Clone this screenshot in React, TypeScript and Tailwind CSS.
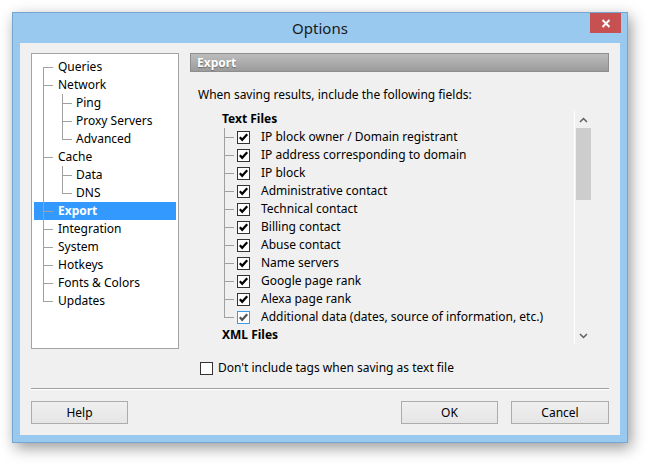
import * as React from 'react'

interface NavRow {
  label: string
  level: 0 | 1
  first?: boolean
  last?: boolean
  selected?: boolean
}

const navRows: NavRow[] = [
  { label: 'Queries', level: 0, first: true },
  { label: 'Network', level: 0 },
  { label: 'Ping', level: 1, first: true },
  { label: 'Proxy Servers', level: 1 },
  { label: 'Advanced', level: 1, last: true },
  { label: 'Cache', level: 0 },
  { label: 'Data', level: 1, first: true },
  { label: 'DNS', level: 1, last: true },
  { label: 'Export', level: 0, selected: true },
  { label: 'Integration', level: 0 },
  { label: 'System', level: 0 },
  { label: 'Hotkeys', level: 0 },
  { label: 'Fonts & Colors', level: 0 },
  { label: 'Updates', level: 0, last: true },
]

const fields = [
  'IP block owner / Domain registrant',
  'IP address corresponding to domain',
  'IP block',
  'Administrative contact',
  'Technical contact',
  'Billing contact',
  'Abuse contact',
  'Name servers',
  'Google page rank',
  'Alexa page rank',
  'Additional data (dates, source of information, etc.)',
]

const LINE = '#a0a0a0'

// one tree connector cell: vertical line at x, elbow to the right at the row middle
const Connector = ({ width, x, top, bottom, elbowTo }: { width: number, x: number, top: number, bottom: number, elbowTo?: number }) => (
  <svg width={width} height={18} className="shrink-0" shapeRendering="crispEdges">
    <line x1={x + 0.5} y1={top} x2={x + 0.5} y2={bottom} stroke={LINE} />
    {elbowTo !== undefined && <line x1={x} y1={9.5} x2={elbowTo} y2={9.5} stroke={LINE} />}
  </svg>
)

const CheckBox = ({ checked, focused }: { checked: boolean, focused?: boolean }) => (
  <span
    className={`flex h-[13px] w-[13px] shrink-0 items-center justify-center border bg-white ${focused ? 'border-[#3c9be8]' : 'border-[#333333]'}`}
  >
    {checked && (
      <svg width="11" height="11" viewBox="0 0 11 11">
        <path d="M1.8 5.2 L4.2 7.8 L9.2 2.2" fill="none" stroke={focused ? '#555' : '#000'} strokeWidth="2.2" />
      </svg>
    )}
  </span>
)

const NavTree = () => (
  <div className="h-[296px] w-[148px] shrink-0 border border-[#a3a3a3] bg-white px-[2px] pt-[4px]">
    {navRows.map((row) => {
      const cls = row.selected ? 'bg-[#3399ff] text-white font-bold' : 'text-black'
      return (
        <div key={row.label} className={`flex h-[18px] items-center ${cls}`}>
          {row.level === 0
            ? (
                <Connector width={24} x={9} top={row.first ? 9 : 0} bottom={row.last ? 10 : 18} elbowTo={19} />
              )
            : (
                <>
                  <Connector width={24} x={9} top={0} bottom={18} />
                  <Connector width={18} x={4} top={0} bottom={row.last ? 10 : 18} elbowTo={14} />
                </>
              )}
          <span className="whitespace-nowrap leading-[18px]">{row.label}</span>
        </div>
      )
    })}
  </div>
)

const Chevron = ({ up }: { up?: boolean }) => (
  <svg width="9" height="6" viewBox="0 0 9 6">
    <path d={up ? 'M1 5 L4.5 1.5 L8 5' : 'M1 1 L4.5 4.5 L8 1'} fill="none" stroke="#606060" strokeWidth="1.5" />
  </svg>
)

const FieldList = () => (
  <div className="mt-[7px] ml-[8px] flex h-[234px] w-[393px]">
    <div className="w-[376px] overflow-hidden">
      <div className="flex h-[18px] items-center pl-[24px] font-bold">Text Files</div>
      {fields.map((f, i) => (
        <div key={f} className="flex h-[18px] items-center">
          <span className="w-[20px] shrink-0" />
          <Connector width={19} x={6} top={0} bottom={i === fields.length - 1 ? 10 : 18} elbowTo={16} />
          <CheckBox checked focused={i === fields.length - 1} />
          <span className="ml-[11px] whitespace-nowrap">{f}</span>
        </div>
      ))}
      <div className="flex h-[18px] items-center pl-[24px] font-bold">XML Files</div>
    </div>
    {/* scrollbar */}
    <div className="mt-[1px] flex w-[17px] flex-col border-l border-white">
      <div className="flex h-[17px] items-center justify-center"><Chevron up /></div>
      <div className="mx-auto h-[72px] w-[15px] bg-[#cdcdcd]" />
      <div className="flex-1" />
      <div className="flex h-[17px] items-center justify-center"><Chevron /></div>
    </div>
  </div>
)

const DlgButton = ({ label, w }: { label: string, w: string }) => (
  <button className={`h-[23px] ${w} border border-[#acacac] bg-gradient-to-b from-[#f0f0f0] to-[#e5e5e5] text-[12px] text-black`}>
    {label}
  </button>
)

export default function App() {
  return (
    <div className="h-[464px] w-[648px] overflow-hidden bg-white pt-[12px] pl-[12px] font-['Noto_Sans',sans-serif] text-[12px] text-black">
      <div className="flex h-[431px] w-[616px] flex-col border border-[#77a5d2] bg-[#99c9ef] shadow-[3px_5px_14px_rgba(0,0,0,0.4)]">
        {/* title bar */}
        <div className="flex h-[30px] shrink-0 items-start">
          <div className="w-[37px] shrink-0" />
          <div className="flex h-[30px] flex-1 items-center justify-center text-[15px] text-[#1a1a1a]">Options</div>
          <div className="flex h-[20px] w-[31px] shrink-0 items-center justify-center bg-[#c75050]">
            <svg width="10" height="9" viewBox="0 0 10 9">
              <path d="M1.5 1 L8.5 8 M8.5 1 L1.5 8" stroke="#fff" strokeWidth="2" />
            </svg>
          </div>
          <div className="w-[6px] shrink-0" />
        </div>

        {/* client area */}
        <div className="mx-[7px] mb-[7px] flex flex-1 flex-col bg-[#f0f0f0] px-[11px] pt-[10px]">
          <div className="flex items-start gap-[11px]">
            <NavTree />
            <div className="flex flex-1 flex-col">
              <div className="flex h-[19px] items-center border border-[#8e8e8e] bg-gradient-to-b from-[#bdbdbd] to-[#9b9b9b] pl-[6px] font-bold text-white [text-shadow:0_1px_1px_rgba(0,0,0,0.35)]">
                Export
              </div>
              <div className="mt-[15px] pl-[8px] leading-[16px]">When saving results, include the following fields:</div>
              <FieldList />
              <div className="mt-[16px] flex h-[16px] items-center pl-[10px]">
                <CheckBox checked={false} />
                <span className="ml-[5px]">Don&apos;t include tags when saving as text file</span>
              </div>
            </div>
          </div>

          <div className="mt-[12px] h-[2px] border-t border-b border-t-[#a0a0a0] border-b-white" />

          <div className="mt-[11px] flex items-center">
            <DlgButton label="Help" w="w-[97px]" />
            <div className="flex-1" />
            <DlgButton label="OK" w="w-[97px]" />
            <div className="w-[13px]" />
            <DlgButton label="Cancel" w="w-[98px]" />
          </div>
        </div>
      </div>
    </div>
  )
}
